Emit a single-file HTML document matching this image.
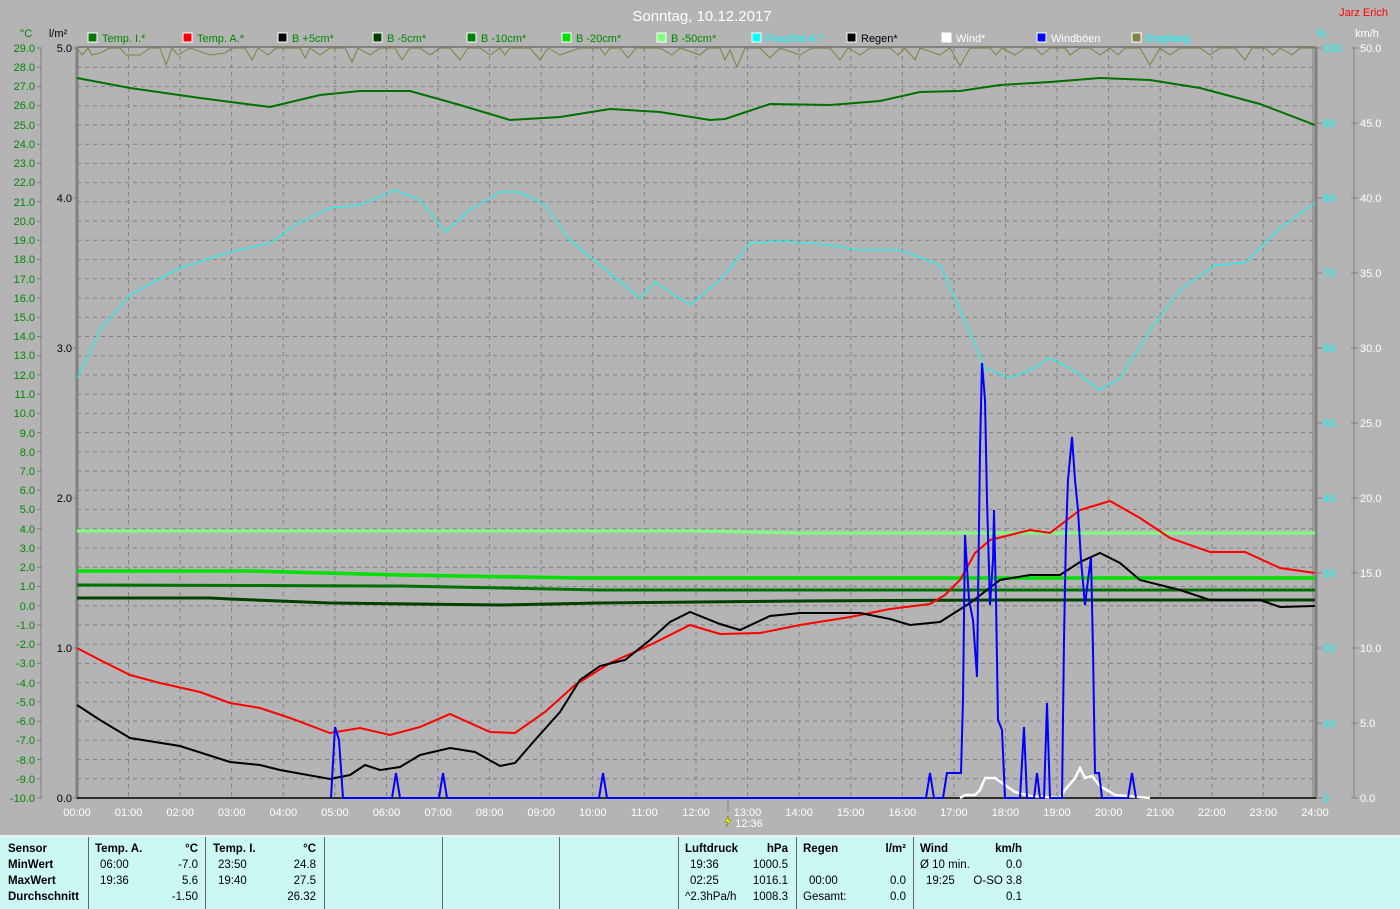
<!DOCTYPE html>
<html><head><meta charset="utf-8"><style>
html,body{margin:0;padding:0;background:#b4b4b4;}
body{width:1400px;height:907px;position:relative;overflow:hidden;font-family:"Liberation Sans",sans-serif;}
svg{position:absolute;left:0;top:0}
.tbl{position:absolute;left:0;top:835px;width:1400px;height:72px;background:#ccf8f4;border-top:2px solid #eee;font-size:11.5px;color:#000}
.sep{position:absolute;top:0;width:1px;height:72px;background:#666}
.t{position:absolute;white-space:nowrap}
.b{font-weight:bold}
.r{text-align:right}
</style></head><body>
<svg width="1400" height="835" viewBox="0 0 1400 835" font-family="Liberation Sans, sans-serif">
<text x="702" y="21" fill="#fff" font-size="15" text-anchor="middle">Sonntag, 10.12.2017</text>
<text x="1388" y="16" fill="#f00" font-size="11" text-anchor="end">Jarz Erich</text>
<text x="26" y="37" fill="#080" font-size="11" text-anchor="middle">°C</text>
<text x="58" y="37" fill="#000" font-size="11" text-anchor="middle">l/m²</text>
<text x="1321" y="37" fill="#0ff" font-size="11" text-anchor="middle">%</text>
<text x="1367" y="37" fill="#fff" font-size="11" text-anchor="middle">km/h</text>
<g font-size="11">
<rect x="88" y="33" width="9" height="9" fill="#007800" stroke="#fff"/><text x="102" y="42" fill="#080">Temp. I.*</text>
<rect x="183" y="33" width="9" height="9" fill="#f00" stroke="#fff"/><text x="197" y="42" fill="#080">Temp. A.*</text>
<rect x="278" y="33" width="9" height="9" fill="#000" stroke="#fff"/><text x="292" y="42" fill="#080">B +5cm*</text>
<rect x="373" y="33" width="9" height="9" fill="#004000" stroke="#fff"/><text x="387" y="42" fill="#080">B -5cm*</text>
<rect x="467" y="33" width="9" height="9" fill="#008000" stroke="#fff"/><text x="481" y="42" fill="#080">B -10cm*</text>
<rect x="562" y="33" width="9" height="9" fill="#00e000" stroke="#fff"/><text x="576" y="42" fill="#080">B -20cm*</text>
<rect x="657" y="33" width="9" height="9" fill="#80ff80" stroke="#fff"/><text x="671" y="42" fill="#080">B -50cm*</text>
<rect x="752" y="33" width="9" height="9" fill="#0ff" stroke="#fff"/><text x="766" y="42" fill="#0ff">Feuchte A.*</text>
<rect x="847" y="33" width="9" height="9" fill="#000" stroke="#fff"/><text x="861" y="42" fill="#000">Regen*</text>
<rect x="942" y="33" width="9" height="9" fill="#fff" stroke="#fff"/><text x="956" y="42" fill="#fff">Wind*</text>
<rect x="1037" y="33" width="9" height="9" fill="#00f" stroke="#fff"/><text x="1051" y="42" fill="#fff">Windböen</text>
<rect x="1132" y="33" width="9" height="9" fill="#808040" stroke="#fff"/><text x="1146" y="42" fill="#0ff">Empfang</text>
</g>
<path fill="none" stroke="#808080" stroke-dasharray="4,4" d="M77 67.2H1315M77 86.5H1315M77 105.7H1315M77 124.9H1315M77 144.2H1315M77 163.4H1315M77 182.6H1315M77 201.8H1315M77 221.1H1315M77 240.3H1315M77 259.5H1315M77 278.8H1315M77 298H1315M77 317.2H1315M77 336.5H1315M77 355.7H1315M77 374.9H1315M77 394.2H1315M77 413.4H1315M77 432.6H1315M77 451.8H1315M77 471.1H1315M77 490.3H1315M77 509.5H1315M77 528.8H1315M77 548H1315M77 567.2H1315M77 586.5H1315M77 605.7H1315M77 624.9H1315M77 644.2H1315M77 663.4H1315M77 682.6H1315M77 701.8H1315M77 721.1H1315M77 740.3H1315M77 759.5H1315M77 778.8H1315
M128.6 48V798M180.2 48V798M231.7 48V798M283.3 48V798M334.9 48V798M386.5 48V798M438.1 48V798M489.6 48V798M541.2 48V798M592.8 48V798M644.4 48V798M696 48V798M747.5 48V798M799.1 48V798M850.7 48V798M902.3 48V798M953.9 48V798M1005.4 48V798M1057 48V798M1108.6 48V798M1160.2 48V798M1211.8 48V798M1263.3 48V798"/>
<!-- axes -->
<line x1="41" y1="48" x2="41" y2="798" stroke="#808080"/>
<line x1="77" y1="47" x2="77" y2="799" stroke="#808080" stroke-width="3"/>
<line x1="1316" y1="47" x2="1316" y2="799" stroke="#808080" stroke-width="3"/>
<line x1="1313" y1="48" x2="1313" y2="798" stroke="#808080"/>
<line x1="77" y1="47" x2="1316" y2="47" stroke="#808080" stroke-width="2"/>
<line x1="77" y1="798" x2="1316" y2="798" stroke="#000" stroke-width="1.5"/>
<line x1="1354" y1="48" x2="1354" y2="798" stroke="#808080"/>
<g stroke="#808080">
<path d="M37 48H42M37 67.2H42M37 86.5H42M37 105.7H42M37 124.9H42M37 144.2H42M37 163.4H42M37 182.6H42M37 201.8H42M37 221.1H42M37 240.3H42M37 259.5H42M37 278.8H42M37 298H42M37 317.2H42M37 336.5H42M37 355.7H42M37 374.9H42M37 394.2H42M37 413.4H42M37 432.6H42M37 451.8H42M37 471.1H42M37 490.3H42M37 509.5H42M37 528.8H42M37 548H42M37 567.2H42M37 586.5H42M37 605.7H42M37 624.9H42M37 644.2H42M37 663.4H42M37 682.6H42M37 701.8H42M37 721.1H42M37 740.3H42M37 759.5H42M37 778.8H42M37 798H42"/>
<path d="M1317 48H1322M1317 123H1322M1317 198H1322M1317 273H1322M1317 348H1322M1317 423H1322M1317 498H1322M1317 573H1322M1317 648H1322M1317 723H1322M1317 798H1322M1351 48H1358M1351 123H1358M1351 198H1358M1351 273H1358M1351 348H1358M1351 423H1358M1351 498H1358M1351 573H1358M1351 648H1358M1351 723H1358M1351 798H1358M73 198H77M73 348H77M73 498H77M73 648H77M73 798H77M73 48H77"/>
<line x1="728" y1="798" x2="728" y2="812"/>
</g>
<g font-size="11" fill="#080" text-anchor="end">
<text x="35" y="52">29.0</text><text x="35" y="71">28.0</text><text x="35" y="90">27.0</text><text x="35" y="109">26.0</text><text x="35" y="129">25.0</text><text x="35" y="148">24.0</text><text x="35" y="167">23.0</text><text x="35" y="186">22.0</text><text x="35" y="206">21.0</text><text x="35" y="225">20.0</text><text x="35" y="244">19.0</text><text x="35" y="263">18.0</text><text x="35" y="283">17.0</text><text x="35" y="302">16.0</text><text x="35" y="321">15.0</text><text x="35" y="340">14.0</text><text x="35" y="359">13.0</text><text x="35" y="379">12.0</text><text x="35" y="398">11.0</text><text x="35" y="417">10.0</text><text x="35" y="437">9.0</text><text x="35" y="456">8.0</text><text x="35" y="475">7.0</text><text x="35" y="494">6.0</text><text x="35" y="513">5.0</text><text x="35" y="533">4.0</text><text x="35" y="552">3.0</text><text x="35" y="571">2.0</text><text x="35" y="590">1.0</text><text x="35" y="610">0.0</text><text x="35" y="629">-1.0</text><text x="35" y="648">-2.0</text><text x="35" y="667">-3.0</text><text x="35" y="687">-4.0</text><text x="35" y="706">-5.0</text><text x="35" y="725">-6.0</text><text x="35" y="744">-7.0</text><text x="35" y="764">-8.0</text><text x="35" y="783">-9.0</text><text x="35" y="802">-10.0</text>
</g>
<g font-size="11" fill="#000" text-anchor="end">
<text x="72" y="52">5.0</text><text x="72" y="202">4.0</text><text x="72" y="352">3.0</text><text x="72" y="502">2.0</text><text x="72" y="652">1.0</text><text x="72" y="802">0.0</text>
</g>
<g font-size="11" fill="#0ff">
<text x="1323" y="52">100</text><text x="1323" y="127">90</text><text x="1323" y="202">80</text><text x="1323" y="277">70</text><text x="1323" y="352">60</text><text x="1323" y="427">50</text><text x="1323" y="502">40</text><text x="1323" y="577">30</text><text x="1323" y="652">20</text><text x="1323" y="727">10</text><text x="1323" y="802">0</text>
</g>
<g font-size="11" fill="#fff">
<text x="1360" y="52">50.0</text><text x="1360" y="127">45.0</text><text x="1360" y="202">40.0</text><text x="1360" y="277">35.0</text><text x="1360" y="352">30.0</text><text x="1360" y="427">25.0</text><text x="1360" y="502">20.0</text><text x="1360" y="577">15.0</text><text x="1360" y="652">10.0</text><text x="1360" y="727">5.0</text><text x="1360" y="802">0.0</text>
</g>
<g font-size="11" fill="#fff" text-anchor="middle">
<text x="77" y="816">00:00</text><text x="128.6" y="816">01:00</text><text x="180.2" y="816">02:00</text><text x="231.7" y="816">03:00</text><text x="283.3" y="816">04:00</text><text x="334.9" y="816">05:00</text><text x="386.5" y="816">06:00</text><text x="438.1" y="816">07:00</text><text x="489.6" y="816">08:00</text><text x="541.2" y="816">09:00</text><text x="592.8" y="816">10:00</text><text x="644.4" y="816">11:00</text><text x="696" y="816">12:00</text><text x="747.5" y="816">13:00</text><text x="799.1" y="816">14:00</text><text x="850.7" y="816">15:00</text><text x="902.3" y="816">16:00</text><text x="953.9" y="816">17:00</text><text x="1005.4" y="816">18:00</text><text x="1057" y="816">19:00</text><text x="1108.6" y="816">20:00</text><text x="1160.2" y="816">21:00</text><text x="1211.8" y="816">22:00</text><text x="1263.3" y="816">23:00</text><text x="1315" y="816">24:00</text>
<text x="749" y="827">12:36</text>
</g>
<path d="M728 816l-3 6h3l-2 5 5-7h-3z" fill="#ff0" stroke="#660" stroke-width=".5"/>
<!-- Empfang -->
<polyline fill="none" stroke="#808040" stroke-width="1" points="77,48 82,55 88,48 92,55 100,53 110,48 120,48 126,55 140,55 150,48 160,48 166,65 172,48 178,55 190,48 210,55 225,53 232,48 245,48 252,60 258,48 268,55 276,48 300,48 305,58 310,48 320,55 330,48 345,48 352,62 358,48 370,55 380,48 395,48 402,60 410,48 420,48 430,55 440,48 450,48 460,60 468,48 480,48 490,55 500,48 505,55 510,48 530,48 540,60 548,48 560,55 580,48 600,48 605,55 610,48 620,48 628,58 636,48 660,48 672,55 680,48 700,55 708,48 720,48 725,60 730,50 737,67 745,48 760,48 770,58 780,48 800,55 812,48 830,48 840,60 848,48 860,55 870,48 890,48 898,55 905,48 915,60 920,48 940,55 950,48 960,66 970,48 990,48 996,55 1002,48 1015,55 1025,48 1035,48 1042,55 1050,48 1065,48 1070,55 1080,48 1090,48 1100,55 1110,48 1118,55 1125,48 1140,48 1150,65 1160,48 1170,55 1180,48 1200,48 1210,55 1220,48 1235,48 1245,60 1252,48 1265,48 1273,55 1280,48 1292,55 1300,48 1315,48"/>
<!-- soil lines -->
<polyline fill="none" stroke="#80ff80" stroke-width="3" points="77,531 700,531 800,533 1315,533"/>
<polyline fill="none" stroke="#00e000" stroke-width="3.5" points="77,571 250,571 400,575 580,578 1315,578"/>
<polyline fill="none" stroke="#007000" stroke-width="3" points="77,585 400,586 600,590 1315,590"/>
<polyline fill="none" stroke="#004000" stroke-width="3" points="77,598 210,598 230,599 330,603 500,605 600,603 800,601 1000,600 1315,600"/>
<!-- humidity -->
<polyline fill="none" stroke="#0ff" stroke-width="1" points="77,378 100,330 130,295 180,268 230,252 270,243 300,222 330,208 360,205 395,190 420,200 445,232 470,210 500,192 520,192 545,205 570,240 600,265 640,298 655,282 690,305 720,280 750,243 780,241 820,244 860,250 900,250 940,265 960,310 985,368 1010,378 1030,370 1050,358 1070,368 1100,390 1120,378 1150,330 1180,290 1215,265 1245,263 1280,228 1315,203"/>
<!-- Temp I -->
<polyline fill="none" stroke="#007000" stroke-width="2" points="77,78 130,88 200,98 270,107 320,95 360,91 410,91 460,105 510,120 560,117 610,109 660,112 710,120 725,119 770,104 830,105 880,101 920,92 960,91 1000,85 1050,82 1100,78 1150,80 1200,88 1260,104 1315,125"/>
<!-- Temp A -->
<polyline fill="none" stroke="#f00" stroke-width="2" points="77,648 100,660 130,675 160,683 200,692 230,703 260,708 290,718 330,733 360,728 390,735 420,727 450,714 490,732 515,733 545,712 575,685 610,663 650,645 690,625 720,634 760,633 800,625 850,617 890,609 930,604 945,595 960,580 975,553 990,540 1010,535 1030,530 1050,533 1080,510 1110,501 1140,518 1170,538 1210,552 1245,552 1280,568 1315,573"/>
<!-- B +5 -->
<polyline fill="none" stroke="#000" stroke-width="2" points="77,705 100,720 130,738 180,746 230,762 260,765 280,770 330,779 350,775 365,765 380,770 400,767 420,755 450,748 475,752 500,766 515,763 535,740 560,712 580,680 600,666 625,660 650,640 670,622 690,612 720,624 740,630 770,616 800,613 860,613 890,619 910,625 940,622 970,603 1000,580 1030,575 1060,575 1080,562 1100,553 1120,563 1140,580 1180,590 1210,600 1260,600 1280,607 1315,606"/>
<!-- wind -->
<polyline fill="none" stroke="#fff" stroke-width="2.5" points="960,798 965,795 975,795 980,790 985,778 995,778 1005,785 1015,792 1030,796 1060,798 1065,790 1075,778 1080,768 1085,778 1092,776 1100,786 1115,795 1150,798"/>
<!-- gusts -->
<polyline fill="none" stroke="#00f" stroke-width="2" stroke-linejoin="miter" points="331,798 335,727 339,740 343,798 392,798 396,773 400,798 439,798 443,773 447,798 599,798 603,773 607,798 926,798 930,773 934,798 943,798 947,773 961,773 963,700 965,535 969,600 973,620 977,677 980,450 982,363 985,400 987,500 990,605 993,560 994,510 996,600 998,720 1002,730 1005,798 1020,798 1024,727 1027,798 1034,798 1037,773 1040,798 1044,798 1047,703 1050,798 1062,798 1064,640 1066,535 1068,480 1072,437 1075,480 1078,510 1081,560 1085,605 1088,580 1091,557 1093,650 1095,773 1099,773 1102,798 1128,798 1132,773 1136,798"/>
</svg>
<div class="tbl">
<div class="sep" style="left:88px"></div><div class="sep" style="left:205px"></div><div class="sep" style="left:324px"></div><div class="sep" style="left:442px"></div><div class="sep" style="left:559px"></div><div class="sep" style="left:678px"></div><div class="sep" style="left:796px"></div><div class="sep" style="left:913px"></div>
<div class="t b" style="left:8px;top:6px">Sensor</div><div class="t b" style="left:8px;top:22px">MinWert</div><div class="t b" style="left:8px;top:38px">MaxWert</div><div class="t b" style="left:8px;top:54px">Durchschnitt</div>
<div class="t b" style="left:95px;top:6px">Temp. A.</div><div class="t b r" style="right:1202px;top:6px">°C</div>
<div class="t" style="left:100px;top:22px">06:00</div><div class="t r" style="right:1202px;top:22px">-7.0</div>
<div class="t" style="left:100px;top:38px">19:36</div><div class="t r" style="right:1202px;top:38px">5.6</div>
<div class="t r" style="right:1202px;top:54px">-1.50</div>
<div class="t b" style="left:213px;top:6px">Temp. I.</div><div class="t b r" style="right:1084px;top:6px">°C</div>
<div class="t" style="left:218px;top:22px">23:50</div><div class="t r" style="right:1084px;top:22px">24.8</div>
<div class="t" style="left:218px;top:38px">19:40</div><div class="t r" style="right:1084px;top:38px">27.5</div>
<div class="t r" style="right:1084px;top:54px">26.32</div>
<div class="t b" style="left:685px;top:6px">Luftdruck</div><div class="t b r" style="right:612px;top:6px">hPa</div>
<div class="t" style="left:690px;top:22px">19:36</div><div class="t r" style="right:612px;top:22px">1000.5</div>
<div class="t" style="left:690px;top:38px">02:25</div><div class="t r" style="right:612px;top:38px">1016.1</div>
<div class="t" style="left:685px;top:54px">^2.3hPa/h</div><div class="t r" style="right:612px;top:54px">1008.3</div>
<div class="t b" style="left:803px;top:6px">Regen</div><div class="t b r" style="right:494px;top:6px">l/m²</div>
<div class="t" style="left:809px;top:38px">00:00</div><div class="t r" style="right:494px;top:38px">0.0</div>
<div class="t" style="left:803px;top:54px">Gesamt:</div><div class="t r" style="right:494px;top:54px">0.0</div>
<div class="t b" style="left:920px;top:6px">Wind</div><div class="t b r" style="right:378px;top:6px">km/h</div>
<div class="t" style="left:920px;top:22px">Ø 10 min.</div><div class="t r" style="right:378px;top:22px">0.0</div>
<div class="t" style="left:926px;top:38px">19:25</div><div class="t r" style="right:378px;top:38px">O-SO 3.8</div>
<div class="t r" style="right:378px;top:54px">0.1</div>
</div>
</body></html>
